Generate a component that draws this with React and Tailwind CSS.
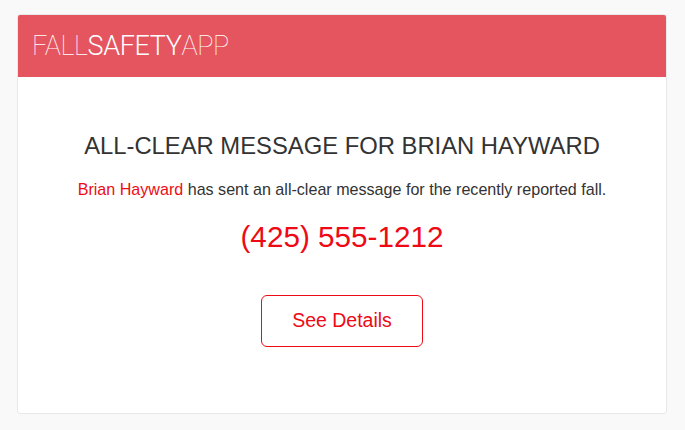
export default function App() {
  return (
    <div className="w-[685px] h-[430px] bg-[#f9f9f9] pt-[14px] pl-[17px]" style={{ fontFamily: '"Liberation Sans", Arial, sans-serif' }}>
      <div className="w-[650px] h-[400px] bg-white border border-[#e8e8e8] rounded-[3px] overflow-hidden flex flex-col">
        <div className="h-[63px] bg-[#e55560] flex items-center pl-[15px] -mx-px -mt-px">
          <span className="text-white text-[27px] tracking-[-0.4px] mt-[2px]" style={{ fontFamily: 'Roboto, sans-serif' }}>
            <span className="font-thin">FALL</span>
            <span className="font-light">SAFETY</span>
            <span className="font-thin">APP</span>
          </span>
        </div>
        <div className="flex flex-col items-center">
          <h1 className="mt-[57px] text-[23.8px] text-[#333] leading-none font-normal">ALL-CLEAR MESSAGE FOR BRIAN HAYWARD</h1>
          <p className="mt-[23px] text-[16.1px] text-[#333] leading-none">
            <span className="text-[#ee0a14]">Brian Hayward</span> has sent an all-clear message for the recently reported fall.
          </p>
          <div className="mt-[25px] text-[29.7px] text-[#ee0a14] leading-none">(425) 555-1212</div>
          <button className="mt-[43px] w-[162px] h-[52px] border border-[#ee0a14] rounded-[6px] text-[19.5px] text-[#ee0a14] bg-white">See Details</button>
        </div>
      </div>
    </div>
  );
}
